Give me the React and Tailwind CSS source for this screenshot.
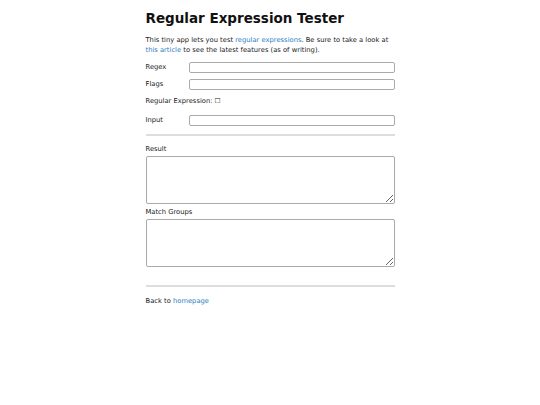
export default function App() {
  return (
    <div className="min-h-[405px] bg-white text-[#222] [font-family:'DejaVu_Sans',sans-serif]">
      <div className="mx-auto w-[249px] pt-[8px]">
        <h1 className="text-[13.5px] font-bold leading-[20px] text-[#111]">Regular Expression Tester</h1>
        <p className="mt-[7px] text-[6.75px] leading-[10px]">
          This tiny app lets you test <a className="text-[#2a80c4]">regular expressions</a>. Be sure to take a look at{" "}
          <a className="text-[#2a80c4]">this article</a> to see the latest features (as of writing).
        </p>
        <div className="mt-[7px] flex flex-col gap-[6px] text-[6.75px]">
          <div className="flex items-center">
            <span className="w-[43px]">Regex</span>
            <input className="h-[11px] min-w-0 flex-1 rounded-[2px] border border-[#aaa] bg-white outline-none" />
          </div>
          <div className="flex items-center">
            <span className="w-[43px]">Flags</span>
            <input className="h-[11px] min-w-0 flex-1 rounded-[2px] border border-[#aaa] bg-white outline-none" />
          </div>
          <div className="flex h-[11px] items-center">
            <span>Regular Expression: ☐</span>
          </div>
          <div className="mt-[2px] flex items-center">
            <span className="w-[43px]">Input</span>
            <input className="h-[11px] min-w-0 flex-1 rounded-[2px] border border-[#aaa] bg-white outline-none" />
          </div>
        </div>
        <div className="mt-[8px] h-[2px] bg-[#ddd]"></div>
        <div className="mt-[8px] text-[6.75px] leading-[10px]">Result</div>
        <textarea className="mt-[2px] block h-[48px] w-full resize-y rounded-[2px] border border-[#aaa] bg-white outline-none"></textarea>
        <div className="mt-[3px] text-[6.75px] leading-[10px]">Match Groups</div>
        <textarea className="mt-[2px] block h-[48px] w-full resize-y rounded-[2px] border border-[#aaa] bg-white outline-none"></textarea>
        <div className="mt-[18px] h-[2px] bg-[#ddd]"></div>
        <p className="mt-[9px] text-[6.75px] leading-[10px]">
          Back to <a className="text-[#2a80c4]">homepage</a>
        </p>
      </div>
    </div>
  );
}
